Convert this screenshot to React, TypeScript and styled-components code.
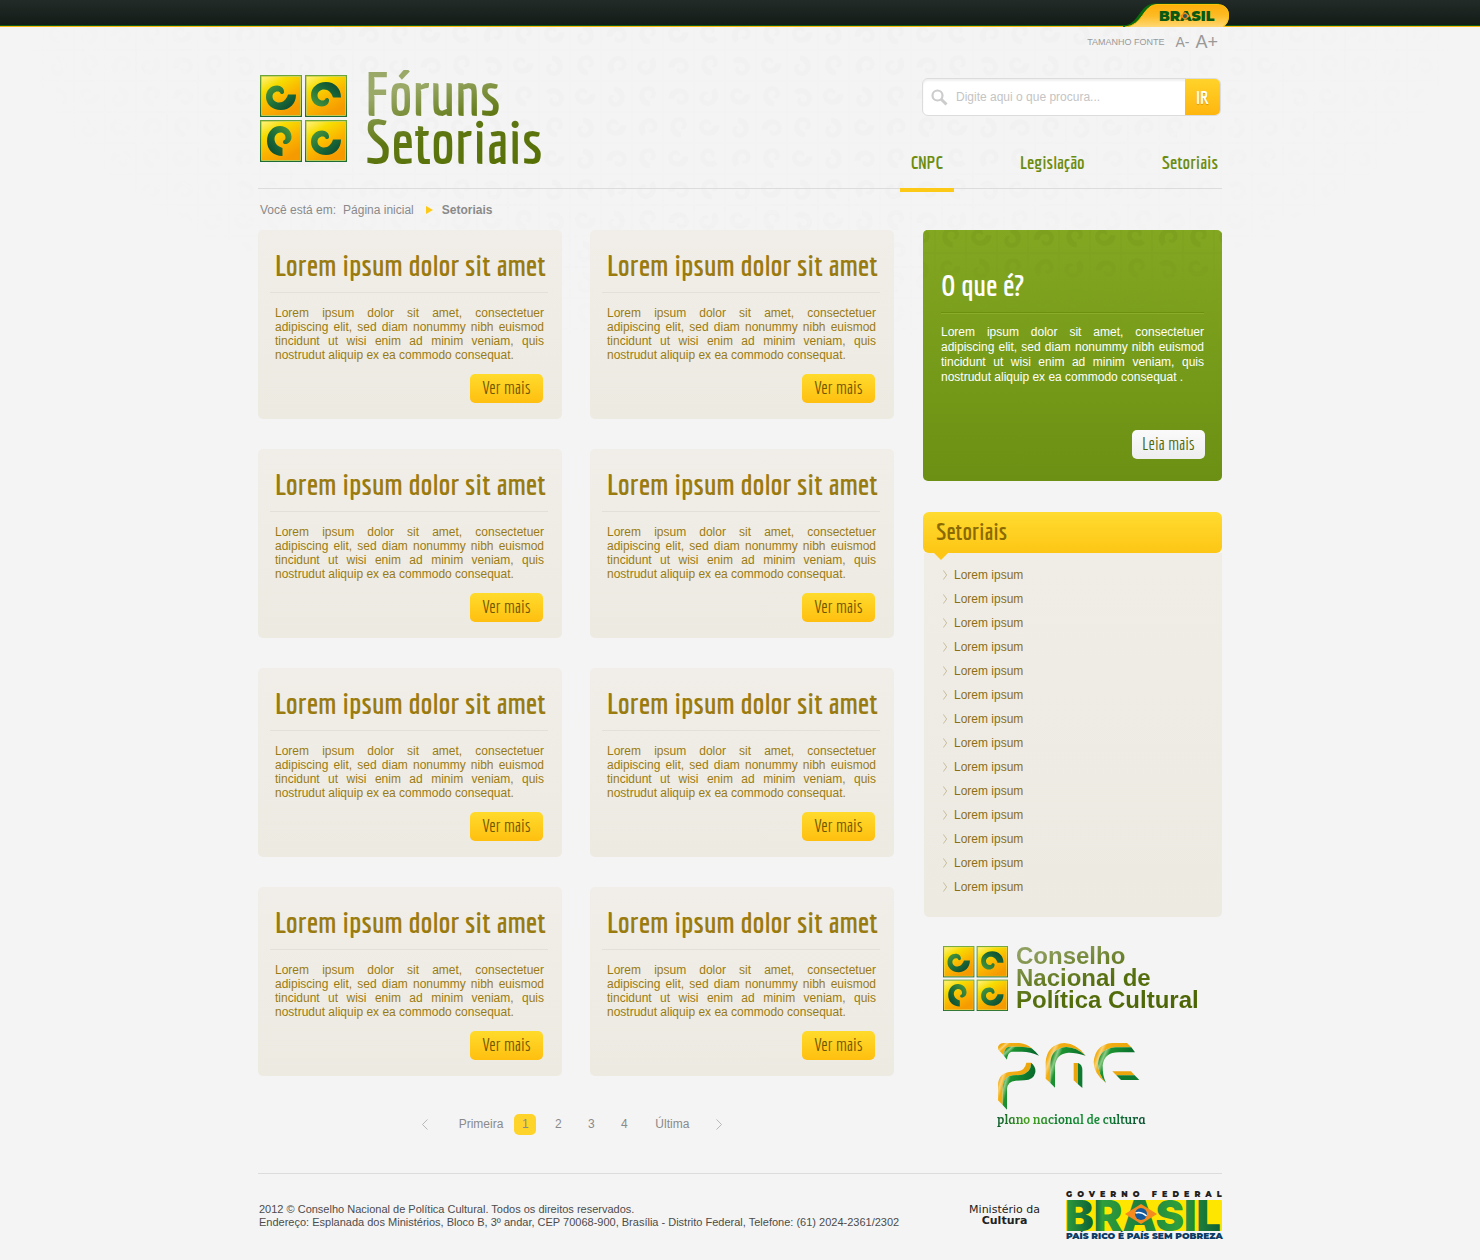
import React, { useId } from "react";
import styled, { createGlobalStyle, css } from "styled-components";

const sans = '"Liberation Sans", Arial, Helvetica, sans-serif';
const display =
  '"Economica", "Open Sans Condensed", "Roboto Condensed", "Liberation Sans Narrow", "Arial Narrow", "Liberation Sans", sans-serif';

const GlobalStyle = createGlobalStyle`
  *, *::before, *::after { box-sizing: border-box; }
  body { margin: 0; background: #f4f4f4; font-family: ${sans}; font-size: 12px; color: #8a8a8a; }
  h1, h2, p, ul, ol { margin: 0; padding: 0; }
  ul, ol { list-style: none; }
  a { color: inherit; text-decoration: none; }
  button, input { font: inherit; margin: 0; padding: 0; border: 0; background: none; color: inherit; }
  button { cursor: pointer; }
  svg { display: block; flex: none; }
`;

const Page = styled.div`
  position: relative;
  overflow: hidden;
`;

const Container = styled.div`
  position: relative;
  width: 100%;
  max-width: 964px;
  margin: 0 auto;
`;

/* ---------- decorative background ---------- */

const curl =
  "M36 19.500C36 29 29.500 35 21 35C12 35 6 29 6 22C6 15 11 10.500 17 10.500C21 10.500 24.500 13.500 24 17.500C23.500 19 22 19.500 20.500 18.500C20 17 19 16.500 17.500 16.500C14.500 16.500 12.500 19 12.500 21.500C12.500 25 15.500 27.500 19 27.500C23.500 27.500 26.500 24 28 19.500Z";

const turns = [
  [90, 0, 270, 180, 90, 0, 45, 135],
  [0, 270, 90, 135, 315, 180, 90, 225],
  [90, 225, 0, 270, 90, 180, 315, 0],
  [180, 90, 270, 0, 135, 90, 0, 270],
];

const Backdrop = styled.svg<{ $ink: string }>`
  position: absolute;
  top: 0;
  left: 0;
  width: 100%;
  height: 100%;
  color: ${(p) => p.$ink};
  pointer-events: none;
`;

const BackdropArea = styled.div`
  position: absolute;
  top: 27px;
  left: 0;
  right: 0;
  height: 320px;
  mask-image: radial-gradient(ellipse 48% 100% at 50% 0, #000 55%, transparent 100%);
`;

function CurlPattern({ ink }: { ink: string }) {
  const id = useId();
  return (
    <Backdrop $ink={ink} aria-hidden="true">
      <defs>
        <pattern id={id} x="12" y="-8" width="248" height="124" patternUnits="userSpaceOnUse">
          {turns.map((row, r) =>
            row.map((turn, c) => (
              <g key={`${r}-${c}`} transform={`translate(${c * 31} ${r * 31})`}>
                <rect x="0.500" y="0.500" width="30" height="30" fill="none" stroke="currentColor" strokeOpacity="0.5" />
                <path d={curl} fill="currentColor" transform={`rotate(${turn} 15.500 15.500) translate(1 0) scale(0.680)`} />
              </g>
            ))
          )}
        </pattern>
      </defs>
      <rect width="100%" height="100%" fill={`url(#${id})`} />
    </Backdrop>
  );
}

/* ---------- logos ---------- */

function TileMark({ size }: { size: number }) {
  const id = useId();
  const tiles = [
    { x: 0, y: 0, t: "" },
    { x: 45, y: 0, t: "translate(0 42) scale(1 -1)" },
    { x: 0, y: 45, t: "rotate(90 21 21)" },
    { x: 45, y: 45, t: "" },
  ];
  return (
    <svg width={size} height={size} viewBox="0 0 87 87" aria-hidden="true">
      <defs>
        <linearGradient id={`${id}a`} x1="0" y1="0" x2="0.600" y2="1">
          <stop offset="0" stopColor="#fff27a" />
          <stop offset="0.300" stopColor="#f7dc00" />
          <stop offset="0.650" stopColor="#fbb400" />
          <stop offset="1" stopColor="#f59a00" />
        </linearGradient>
        <linearGradient id={`${id}b`} x1="0" y1="0" x2="1" y2="1">
          <stop offset="0" stopColor="#4f9a3c" />
          <stop offset="0.500" stopColor="#1f6f3a" />
          <stop offset="1" stopColor="#07432f" />
        </linearGradient>
        <linearGradient id={`${id}c`} x1="0" y1="0" x2="0" y2="1">
          <stop offset="0" stopColor="#6da63a" />
          <stop offset="1" stopColor="#1d6b33" />
        </linearGradient>
      </defs>
      {tiles.map((tile) => (
        <g key={`${tile.x}-${tile.y}`} transform={`translate(${tile.x} ${tile.y})`}>
          <rect width="42" height="42" fill={`url(#${id}c)`} />
          <rect x="1.200" y="1.200" width="39.600" height="39.600" fill="#e6df5a" />
          <rect x="2" y="2" width="38" height="38" fill={`url(#${id}a)`} />
          <path d={curl} fill={`url(#${id}b)`} transform={tile.t} />
        </g>
      ))}
    </svg>
  );
}

function PncLogo() {
  const id = useId();
  const y = `url(#${id}y)`;
  const g = `url(#${id}g)`;
  return (
    <svg width="143" height="69" viewBox="200 335 429 207" aria-hidden="true">
      <defs>
        <linearGradient id={`${id}y`} x1="0" y1="0" x2="1" y2="0.400">
          <stop offset="0" stopColor="#e39a0c" />
          <stop offset="0.160" stopColor="#f2ae12" />
          <stop offset="0.240" stopColor="#f8d27a" />
          <stop offset="0.320" stopColor="#f2ae12" />
          <stop offset="1" stopColor="#e9a40a" />
        </linearGradient>
        <linearGradient id={`${id}g`} x1="0" y1="0" x2="1" y2="0.400">
          <stop offset="0" stopColor="#0f7a2c" />
          <stop offset="0.140" stopColor="#2f9a38" />
          <stop offset="0.220" stopColor="#8fcb86" />
          <stop offset="0.320" stopColor="#1c9431" />
          <stop offset="1" stopColor="#04652c" />
        </linearGradient>
      </defs>
      <path fill={y} d="M203 350Q207 338 220 338L268 338Q290 341 304 354Q288 349 268 349L236 349Q226 351 222 364L219 374L204 358Z" />
      <path fill={g} d="M236 349L268 349Q288 349 304 354Q316 364 326 376Q300 364 275 364L244 364Q232 366 230 388L219 374L222 364Q226 351 236 349Z" />
      <path fill={y} d="M203 510L203 462Q206 425 245 424L262 423Q284 420 288 397L302 397Q304 428 270 434L248 435Q220 438 217 466L217 524Z" />
      <path fill={g} d="M217 524L217 466Q220 438 248 435L270 434Q304 428 302 397Q317 408 315 426Q310 450 282 450L256 451Q232 452 230 476L230 538Z" />
      <path fill={y} d="M346 445L346 395Q350 342 402 338Q440 340 466 376Q438 351 408 350Q362 353 360 400L360 458Z" />
      <path fill={g} d="M360 458L360 400Q362 353 408 350Q438 351 466 376Q435 366 414 367Q378 370 374 406L374 472Z" />
      <path fill="#eba50c" d="M430 398L443 398L443 462L430 450Z" />
      <path fill="#0d7a30" d="M443 398Q456 402 456 420L456 473L443 462Z" />
      <path fill={y} d="M590 338L603 351L555 351Q508 354 503 400Q504 432 527 458Q490 430 490 395Q495 342 545 338Z" />
      <path fill={g} d="M603 351L614 366L565 366Q522 366 517 405Q516 435 527 458Q504 432 503 400Q508 354 555 351Z" />
      <path fill="#eba50c" d="M546 423L602 423L613 435L558 435Z" />
      <path fill="#0d7a30" d="M558 435L613 435L627 449L572 449Z" />
    </svg>
  );
}

const LogoText = styled.text<{ $tall?: boolean }>`
  font-family: ${(p) => (p.$tall ? "" : '"Montserrat", ')}Inter, "Liberation Sans", sans-serif;
  font-weight: 900;
`;

const LogoSvg = styled.svg`
  overflow: visible;
`;

function BrasilTab() {
  const id = useId();
  return (
    <svg width="106" height="24" viewBox="0 0 106 24" role="img" aria-label="Brasil">
      <defs>
        <linearGradient id={id} x1="0" y1="0" x2="0" y2="1">
          <stop offset="0" stopColor="#fdae0a" />
          <stop offset="0.500" stopColor="#fdbb24" />
          <stop offset="1" stopColor="#ffd873" />
        </linearGradient>
      </defs>
      <path d="M0 22.500C16 22.500 16 0.500 32 0.500H96V24H0Z" fill="#0b6a10" />
      <path d="M2 24C20 23 20 1.500 34 1.500H94C102 1.500 106 6 106 12.500C106 18 104 21.500 100 24Z" fill={`url(#${id})`} />
      <path d="M2 24C20 23 20 1.500 34 1.500H94C102 1.500 105.500 6 105.500 12.500C105.500 18 103 21.500 100 23.500" fill="none" stroke="#f9c40c" />
      <LogoText x="36" y="18" fontSize="14" fill="#0b5a14">BRASIL</LogoText>
      <path d="M57 13L62 9L67 13L62 17Z" fill="#f08a1c" />
      <circle cx="62" cy="13" r="2" fill="#2b5a55" />
    </svg>
  );
}

function GovernmentLogo() {
  const id = useId();
  return (
    <LogoSvg width="156" height="56" viewBox="0 -4 156 56" role="img" aria-label="Governo Federal - Brasil">
      <defs>
        <linearGradient id={id} x1="0" y1="0" x2="1" y2="0">
          <stop offset="0" stopColor="#2f9e3c" />
          <stop offset="0.180" stopColor="#0d5f37" />
          <stop offset="0.240" stopColor="#2f9e3c" />
          <stop offset="0.480" stopColor="#1c7f3c" />
          <stop offset="0.720" stopColor="#2f9e3c" />
          <stop offset="1" stopColor="#0d5f37" />
        </linearGradient>
      </defs>
      <LogoText x="0" y="6" fontSize="8" letterSpacing="5" fill="#231f20">GOVERNO FEDERAL</LogoText>
      <rect y="9" width="156" height="31" rx="1" fill="#ffe600" />
      <LogoText $tall x="-1" y="40" fontSize="43" fill={`url(#${id})`}>BRASIL</LogoText>
      <path d="M59 23L75 13L91 23L75 33Z" fill="#f58a1f" />
      <circle cx="75" cy="23" r="6" fill="#155a9c" />
      <path d="M69.500 22Q75 20 80.500 25" fill="none" stroke="#fff" strokeWidth="1.500" />
      <LogoText x="0" y="48" fontSize="9" fill="#0a3c66">PAÍS RICO É PAÍS SEM POBREZA</LogoText>
    </LogoSvg>
  );
}

/* ---------- header ---------- */

const TopBar = styled.div`
  position: relative;
  background: linear-gradient(#222b27, #131b17);
  border-bottom: 1px solid #fdb913;
  box-shadow: inset 0 -1px 0 #0f5a14;
`;

const TopBarInner = styled(Container)`
  display: flex;
  justify-content: flex-end;
  height: 26px;
  padding-top: 3px;
  & > svg { margin-right: -7px; }
`;

const Header = styled.header`
  display: flex;
  justify-content: space-between;
  border-bottom: 1px solid #dcdcdc;
`;

const Brand = styled.a`
  display: flex;
  align-items: center;
  align-self: flex-start;
  gap: 18px;
  margin-top: 43px;
  padding-left: 2px;
`;

const SiteName = styled.h1`
  font-family: ${display};
  font-size: 60px;
  line-height: 48px;
  font-weight: 700;
  color: transparent;
  background: linear-gradient(165deg, #9aa968 20%, #5f7712 55%, #566f04);
  background-clip: text;
`;

const HeaderTools = styled.div`
  width: 322px;
  display: flex;
  flex-direction: column;
  align-items: flex-end;
`;

const FontTools = styled.div`
  display: flex;
  align-items: center;
  height: 30px;
  padding-right: 4px;
  font-size: 9px;
  color: #999;
`;

const FontButton = styled.button<{ $size: number; $gap: number }>`
  margin-left: ${(p) => p.$gap}px;
  font-size: ${(p) => p.$size}px;
  line-height: 20px;
`;

const Search = styled.form`
  display: flex;
  align-items: center;
  width: 299px;
  height: 38px;
  margin: 21px 1px 0 0;
  background: #fff;
  border: 1px solid #dcdcdc;
  border-radius: 6px;
  overflow: hidden;
  box-shadow: inset 0 2px 2px #f0f0f0;
  & > label { padding: 0 8px 0 8px; }
`;

const SearchInput = styled.input`
  flex: 1;
  min-width: 0;
  height: 100%;
  outline: 0;
  color: #777;
  &::placeholder { color: #c4c4c4; opacity: 1; }
`;

const SearchButton = styled.button`
  width: 35px;
  height: 100%;
  font-family: ${display};
  font-size: 19px;
  font-weight: 700;
  color: #fff;
  background: linear-gradient(#ffd32a, #ffb60f);
  text-shadow: 0 1px 1px #d99400;
`;

const Nav = styled.nav`
  display: flex;
  gap: 55px;
  margin: 34px -7px -4px 0;
`;

const NavLink = styled.a<{ $active?: boolean }>`
  padding: 0 11px 14px;
  font-family: ${display};
  font-size: 19px;
  font-weight: 700;
  line-height: 24px;
  color: #6c8c0e;
  border-bottom: 4px solid ${(p) => (p.$active ? "#fcc917" : "transparent")};
`;

const Breadcrumb = styled.nav`
  display: flex;
  align-items: center;
  height: 41px;
  padding-left: 2px;
  & > a { margin-left: 7px; }
  & > svg { margin: 0 9px 0 12px; }
`;

/* ---------- content ---------- */

const Columns = styled.div`
  display: grid;
  grid-template-columns: minmax(0, 636fr) minmax(0, 299fr);
  gap: 29px;
`;

const CardGrid = styled.div`
  display: grid;
  grid-template-columns: repeat(2, minmax(0, 1fr));
  gap: 30px 28px;
`;

const Card = styled.article`
  display: flex;
  flex-direction: column;
  padding: 17px 18px 16px 17px;
  border-radius: 5px;
  background: linear-gradient(#f1eee9, #edeae2);
  color: #9a7b10;
`;

const CardTitle = styled.h2`
  margin: 0 -4px 13px -5px;
  padding: 0 0 9px 5px;
  border-bottom: 1px solid #e2e0d8;
  font-family: ${display};
  font-size: 30px;
  line-height: 36px;
  font-weight: 700;
  white-space: nowrap;
`;

const Copy = styled.p<{ $leading: number }>`
  font-size: 12px;
  line-height: ${(p) => p.$leading}px;
  text-align: justify;
`;

const MoreLink = styled.a<{ $light?: boolean }>`
  align-self: flex-end;
  min-width: 73px;
  margin: 12px 1px 0 0;
  padding-bottom: 2px;
  border-radius: 5px;
  font-family: ${display};
  font-size: 18px;
  line-height: 27px;
  text-align: center;
  color: #6f5600;
  background: linear-gradient(#ffdb2c, #ffbf0f);
  ${(p) =>
    p.$light &&
    css`
      margin: 45px -1px 0 0;
      color: #4c660a;
      background: linear-gradient(#fafafa, #eeeeee);
    `}
`;

const Aside = styled.aside`
  display: flex;
  flex-direction: column;
`;

const About = styled.section`
  position: relative;
  display: flex;
  flex-direction: column;
  padding: 37px 18px 22px;
  border-radius: 5px;
  overflow: hidden;
  background: linear-gradient(#83a721, #6b9013);
  color: #fff;
`;

const AboutTitle = styled(CardTitle)`
  position: relative;
  margin: 0 0 12px;
  padding: 0 0 9px;
  border-bottom: 1px solid #6d9011;
  box-shadow: 0 1px 0 #8aad2c;
`;

const AboutPattern = styled.div`
  position: absolute;
  inset: 0 0 auto 0;
  height: 100px;
  mask-image: linear-gradient(#000 40%, transparent);
`;

const SectorTitle = styled.h2`
  position: relative;
  margin-top: 31px;
  padding: 0 13px 2px;
  border-radius: 6px;
  font-family: ${display};
  font-size: 24px;
  line-height: 39px;
  font-weight: 700;
  color: #8a6a00;
  background: linear-gradient(#ffdb30, #fdc615);
  &::after {
    content: "";
    position: absolute;
    top: 100%;
    left: 11px;
    border: 7px solid transparent;
    border-top-color: #fdc615;
    border-bottom-width: 0;
  }
`;

const SectorList = styled.ul`
  margin-left: 1px;
  padding: 10px 19px 18px;
  border-radius: 0 0 5px 5px;
  background: linear-gradient(#f0ede7, #edeae2);
  color: #8c6f14;
  line-height: 24px;
  & a { display: flex; align-items: center; gap: 7px; }
`;

const Council = styled.a`
  display: flex;
  align-items: center;
  gap: 8px;
  margin: 28px 0 0 20px;
  font-size: 24px;
  line-height: 22px;
  font-weight: 700;
`;

const CouncilName = styled.span`
  white-space: nowrap;
  color: transparent;
  background: linear-gradient(165deg, #8f9f5f 10%, #56700f 50%, #4a6202);
  background-clip: text;
`;

const Plan = styled.a`
  display: flex;
  flex-direction: column;
  align-self: flex-start;
  margin: 31px 0 0 74px;
  font-family: "Bree Serif", "Kreon", "Liberation Serif", serif;
  font-size: 13px;
  line-height: 16px;
`;

const PlanName = styled.span`
  color: transparent;
  background: linear-gradient(90deg, #0a5a2a, #4aa51e 22%, #0c7a2c 40%, #159034 62%, #0a4f33);
  background-clip: text;
`;

const Pager = styled.nav`
  display: flex;
  align-items: center;
  justify-content: center;
  gap: 11px;
  margin-top: 38px;
  padding-right: 8px;
`;

const PageLink = styled.a<{ $current?: boolean; $edge?: "first" | "last" }>`
  min-width: 22px;
  border-radius: 5px;
  line-height: 21px;
  text-align: center;
  ${(p) => p.$current && "background: #ffd42a;"}
  ${(p) => p.$edge === "first" && "margin-left: 20px;"}
  ${(p) => p.$edge === "last" && "margin: 0 16px 0 9px;"}
`;

/* ---------- footer ---------- */

const Footer = styled.footer`
  display: flex;
  align-items: flex-start;
  margin-top: 38px;
  padding: 13px 0 17px;
  border-top: 1px solid #dcdcdc;
  color: #4c4c4c;
`;

const Legal = styled.p`
  flex: 1;
  padding: 16px 0 0 1px;
  font-size: 11px;
  line-height: 13px;
`;

const Ministry = styled.p`
  margin: 17px 26px 0 0;
  font-family: "DejaVu Sans", Verdana, sans-serif;
  font-size: 11px;
  line-height: 11px;
  text-align: center;
  color: #222;
`;

const lorem =
  "Lorem ipsum dolor sit amet, consectetuer adipiscing elit, sed diam nonummy nibh euismod tincidunt ut wisi enim ad minim veniam, quis nostrudut aliquip ex ea commodo consequat";

function Chevron({ left, width, height, color }: { left?: boolean; width: number; height: number; color: string }) {
  return (
    <svg width={width} height={height} viewBox="0 0 6 12" preserveAspectRatio="none" aria-hidden="true">
      <path d={left ? "M5.500 0.500L0.500 6L5.500 11.500" : "M0.500 0.500L5.500 6L0.500 11.500"} fill="none" stroke={color} />
    </svg>
  );
}

export default function App() {
  return (
    <Page>
      <GlobalStyle />
      <BackdropArea>
        <CurlPattern ink="#f1f1f1" />
      </BackdropArea>
      <TopBar>
        <TopBarInner>
          <BrasilTab />
        </TopBarInner>
      </TopBar>
      <Container>
        <Header>
          <Brand href="#inicio">
            <TileMark size={87} />
            <SiteName>
              Fóruns
              <br />
              Setoriais
            </SiteName>
          </Brand>
          <HeaderTools>
            <FontTools>
              <span>TAMANHO FONTE</span>
              <FontButton type="button" $size={14} $gap={11}>A-</FontButton>
              <FontButton type="button" $size={18} $gap={6}>A+</FontButton>
            </FontTools>
            <Search onSubmit={(e) => e.preventDefault()}>
              <label htmlFor="busca" aria-label="Busca">
                <svg width="17" height="17" viewBox="0 0 17 17" aria-hidden="true">
                  <circle cx="6.500" cy="6.500" r="5" fill="none" stroke="#ccc" strokeWidth="2.200" />
                  <path d="M10.200 10.200L15.500 15.500" stroke="#ccc" strokeWidth="3" />
                </svg>
              </label>
              <SearchInput id="busca" type="text" placeholder="Digite aqui o que procura..." />
              <SearchButton type="submit">IR</SearchButton>
            </Search>
            <Nav>
              <NavLink href="#cnpc" $active>CNPC</NavLink>
              <NavLink href="#legislacao">Legislação</NavLink>
              <NavLink href="#setoriais">Setoriais</NavLink>
            </Nav>
          </HeaderTools>
        </Header>
        <Breadcrumb aria-label="Você está em">
          <span>Você está em:</span>
          <a href="#inicio">Página inicial</a>
          <svg width="7" height="8" viewBox="0 0 7 8" aria-hidden="true">
            <path d="M0 0L7 4L0 8Z" fill="#fcc917" />
          </svg>
          <strong>Setoriais</strong>
        </Breadcrumb>
        <Columns>
          <main>
            <CardGrid>
              {Array.from({ length: 8 }, (_, i) => (
                <Card key={i}>
                  <CardTitle>Lorem ipsum dolor sit amet</CardTitle>
                  <Copy $leading={14}>{`${lorem}.`}</Copy>
                  <MoreLink href="#mais">Ver mais</MoreLink>
                </Card>
              ))}
            </CardGrid>
            <Pager aria-label="Paginação">
              <a href="#anterior" aria-label="Anterior">
                <Chevron left width={6} height={11} color="#b5b5b5" />
              </a>
              <PageLink href="#primeira" $edge="first">Primeira</PageLink>
              <PageLink href="#1" $current>1</PageLink>
              <PageLink href="#2">2</PageLink>
              <PageLink href="#3">3</PageLink>
              <PageLink href="#4">4</PageLink>
              <PageLink href="#ultima" $edge="last">Última</PageLink>
              <a href="#proxima" aria-label="Próxima">
                <Chevron width={6} height={11} color="#b5b5b5" />
              </a>
            </Pager>
          </main>
          <Aside>
            <About>
              <AboutPattern>
                <CurlPattern ink="#7da11f" />
              </AboutPattern>
              <AboutTitle>O que é?</AboutTitle>
              <Copy $leading={15}>{`${lorem} .`}</Copy>
              <MoreLink href="#leia" $light>Leia mais</MoreLink>
            </About>
            <SectorTitle>Setoriais</SectorTitle>
            <SectorList>
              {Array.from({ length: 14 }, (_, i) => (
                <li key={i}>
                  <a href="#setorial">
                    <Chevron width={4} height={10} color="#b9ad84" />
                    Lorem ipsum
                  </a>
                </li>
              ))}
            </SectorList>
            <Council href="#cnpc">
              <TileMark size={65} />
              <CouncilName>
                Conselho
                <br />
                Nacional de
                <br />
                Política Cultural
              </CouncilName>
            </Council>
            <Plan href="#pnc">
              <PncLogo />
              <PlanName>plano nacional de cultura</PlanName>
            </Plan>
          </Aside>
        </Columns>
        <Footer>
          <Legal>
            2012 © Conselho Nacional de Política Cultural. Todos os direitos reservados.
            <br />
            Endereço: Esplanada dos Ministérios, Bloco B, 3º andar, CEP 70068-900, Brasília - Distrito Federal, Telefone: (61) 2024-2361/2302
          </Legal>
          <Ministry>
            Ministério da
            <br />
            <strong>Cultura</strong>
          </Ministry>
          <GovernmentLogo />
        </Footer>
      </Container>
    </Page>
  );
}
